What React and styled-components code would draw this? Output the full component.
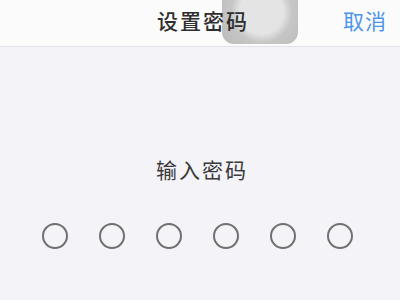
import React from 'react';
import styled, { createGlobalStyle } from 'styled-components';

const GlobalStyle = createGlobalStyle`
  html, body {
    margin: 0;
    padding: 0;
    background: #f3f3f8;
    font-family: "Noto Sans CJK SC", "Noto Sans", sans-serif;
  }
`;

const Page = styled.div`
  width: 400px;
  height: 300px;
  overflow: hidden;
  position: relative;
  background: #f3f3f8;
`;

const NavBar = styled.div`
  height: 47px;
  background: #fbfbfc;
  border-bottom: 1px solid #e2e2e6;
  display: grid;
  grid-template-columns: 1fr auto 1fr;
  align-items: center;
  padding: 0 13px 7px;
  box-sizing: border-box;
`;

const Title = styled.div`
  grid-column: 2;
  position: relative;
  z-index: 2;
  font-size: 21px;
  font-weight: 500;
  color: #2e2e2e;
  letter-spacing: 2px;
  margin-right: -6px;
`;

const Cancel = styled.button`
  grid-column: 3;
  justify-self: end;
  background: none;
  border: none;
  padding: 0;
  font-family: inherit;
  font-size: 21px;
  color: #4b95ea;
  letter-spacing: 1px;
`;

const Body = styled.div`
  display: flex;
  flex-direction: column;
  align-items: center;
  padding-top: 108px;
`;

const Prompt = styled.div`
  font-size: 21px;
  color: #3a3a3a;
  letter-spacing: 2px;
  line-height: 28px;
  margin-right: -4px;
`;

const Dots = styled.div`
  display: flex;
  gap: 31px;
  margin-top: 40px;
  margin-right: 6px;
`;

const Dot = styled.div`
  width: 22px;
  height: 22px;
  border-radius: 50%;
  border: 2px solid #707070;
  background: ${(p) => (p.filled ? '#707070' : 'transparent')};
`;

const Assistive = styled.div`
  position: absolute;
  z-index: 1;
  left: 222px;
  top: -20px;
  width: 76px;
  height: 64px;
  border-radius: 12px;
  background: radial-gradient(circle at 52% 50%, #e4e4e4 0 22px, #d6d6d6 26px, #c6c6c6 60%, #bababa 100%);
`;

export default function App() {
  const digits = [0, 1, 2, 3, 4, 5];
  return (
    <Page>
      <GlobalStyle />
      <NavBar>
        <Title>设置密码</Title>
        <Cancel>取消</Cancel>
      </NavBar>
      <Body>
        <Prompt>输入密码</Prompt>
        <Dots>
          {digits.map((d) => (
            <Dot key={d} />
          ))}
        </Dots>
      </Body>
      <Assistive />
    </Page>
  );
}
